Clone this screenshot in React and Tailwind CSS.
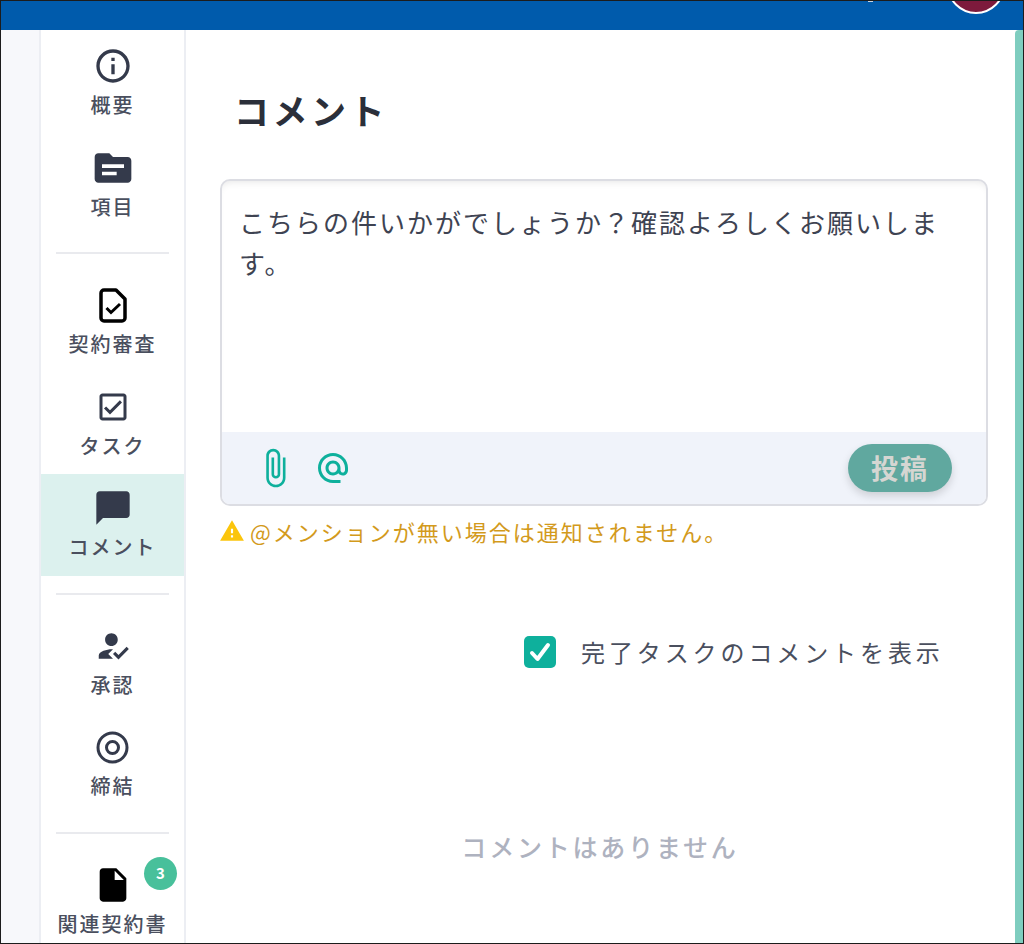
import React from 'react'
import {
  MdInfoOutline,
  MdTopic,
  MdOutlineCheckBox,
  MdChatBubble,
  MdHowToReg,
  MdInsertDriveFile,
  MdAttachFile,
  MdAlternateEmail,
  MdWarning,
} from 'react-icons/md'

const FONT = "[font-family:'Noto_Sans_CJK_JP','Noto_Sans',sans-serif]"

// doc with a check, the icon of the contract review item
const DocCheck = () => (
  <svg width="28" height="35" viewBox="0 0 28 35" fill="none">
    <path d="M5 2h12l9 9v19a3 3 0 0 1-3 3H5a3 3 0 0 1-3-3V5a3 3 0 0 1 3-3z" fill="#fff" stroke="#000" strokeWidth="3.500" strokeLinejoin="round" />
    <path d="M7.500 20l4.500 4.500L21 16" stroke="#000" strokeWidth="3" />
  </svg>
)

// ring with a hollow centre
const Target = () => (
  <svg width="33" height="33" viewBox="0 0 33 33" fill="none" stroke="currentColor" strokeWidth="3">
    <circle cx="16.500" cy="16.500" r="14.500" />
    <circle cx="16.500" cy="16.500" r="6" />
  </svg>
)

const NavItem = ({ icon, label, active, badge }) => {
  return (
    <div className={`relative h-[101.5px] flex flex-col items-center ${active ? 'bg-[#dcf1ee]' : ''}`}>
      <div className="h-[44px] mt-[12px] mb-[4px] flex items-center justify-center text-[#343a4b]">{icon}</div>
      <span className="text-[20px] leading-[26px] font-medium tracking-[2px] text-[#4a4f5e] whitespace-nowrap">{label}</span>
      {badge && (
        <span className="absolute top-[6px] right-[7px] w-[33px] h-[33px] rounded-full bg-[#48c09b] text-white text-[15px] font-bold flex items-center justify-center">
          {badge}
        </span>
      )}
    </div>
  )
}

const Divider = () => <div className="mx-[15px] my-[17px] h-[2px] bg-[#e9eaee]" />

const App = () => {
  return (
    <div className={`w-[1024px] h-[944px] overflow-hidden flex flex-col border border-[#1c1c1c] bg-white ${FONT}`}>
      <header className="relative h-[29px] shrink-0 bg-[#005bac] flex justify-end pr-[18px]">
        <div className="absolute left-[867px] top-0 w-[5px] h-[1px] bg-[#c9d6e6]" />
        <div className="w-[58px] h-[58px] -mt-[45px] rounded-full bg-[#7d1a3c] border-2 border-white" />
      </header>

      <div className="flex flex-1 min-h-0">
        <div className="w-[38px] shrink-0 bg-[#f7f8fb]" />

        <nav className="w-[147px] shrink-0 bg-white border-x-2 border-[#eceef3] pt-[2px]">
          <NavItem label="概要" icon={<MdInfoOutline size={40} />} />
          <NavItem label="項目" icon={<MdTopic size={44} />} />
          <Divider />
          <NavItem label="契約審査" icon={<DocCheck />} />
          <NavItem label="タスク" icon={<MdOutlineCheckBox size={36} />} />
          <NavItem label="コメント" active icon={<MdChatBubble size={40} />} />
          <Divider />
          <NavItem label="承認" icon={<MdHowToReg size={38} />} />
          <NavItem label="締結" icon={<Target />} />
          <Divider />
          <NavItem label="関連契約書" badge="3" icon={<MdInsertDriveFile size={40} className="text-black" />} />
        </nav>

        <main className="flex-1 min-w-0 pl-[34px] pr-[27px]">
          <h1 className="mt-[55px] ml-[14px] text-[35px] leading-[50px] font-bold tracking-[3.500px] text-[#2b2f3a]">コメント</h1>

          <div className="mt-[44px] h-[327px] rounded-[10px] border-2 border-[#dcdde3] overflow-hidden flex flex-col shadow-[inset_0_6px_8px_-6px_rgba(0,0,0,0.12)]">
            <div className="flex-1 pl-[17px] pr-[19px] pt-[20px] text-[26px] leading-[41px] tracking-[2px] text-[#3e4352]">
              こちらの件いかがでしょうか？確認よろしくお願いします。
            </div>
            <div className="h-[72px] bg-[#f0f3fa] flex items-center pl-[32px] pr-[34px]">
              <MdAttachFile size={42} className="text-[#0eb09c]" />
              <MdAlternateEmail size={36} className="text-[#0eb09c] ml-[19px]" />
              <button className="ml-auto w-[104px] h-[48px] rounded-full bg-[#60a89f] text-[#d5d6d2] text-[27px] leading-[40px] font-bold tracking-[2px] shadow-[0_4px_8px_rgba(0,0,0,0.15)]">
                投稿
              </button>
            </div>
          </div>

          <div className="mt-[10px] flex items-center text-[22px] leading-[30px] tracking-[2px] text-[#d39a1c] whitespace-nowrap">
            <MdWarning size={26} className="text-[#fbc50c] -ml-[1px] mr-[5px]" />
            @メンションが無い場合は通知されません。
          </div>

          <div className="mt-[89px] ml-[304px] flex items-center">
            <span className="w-[32px] h-[32px] rounded-[5px] bg-[#0eb09c] flex items-center justify-center">
              <svg width="24" height="24" viewBox="0 0 24 24" fill="none" stroke="#fff" strokeWidth="4" strokeLinecap="round" strokeLinejoin="round">
                <path d="M4 13l5.500 6L20 5" />
              </svg>
            </span>
            <span className="ml-[25px] text-[24px] leading-[34px] tracking-[3.900px] text-[#4a4f5e] whitespace-nowrap">完了タスクのコメントを表示</span>
          </div>

          <p className="mt-[159px] pr-[8px] text-center text-[25px] leading-[36px] font-medium tracking-[2.800px] text-[#aeb2bf]">コメントはありません</p>
        </main>

        <div className="w-[8px] shrink-0 bg-[#7fcdbf] rounded-tl-[4px]" />
      </div>
    </div>
  )
}

export default App
